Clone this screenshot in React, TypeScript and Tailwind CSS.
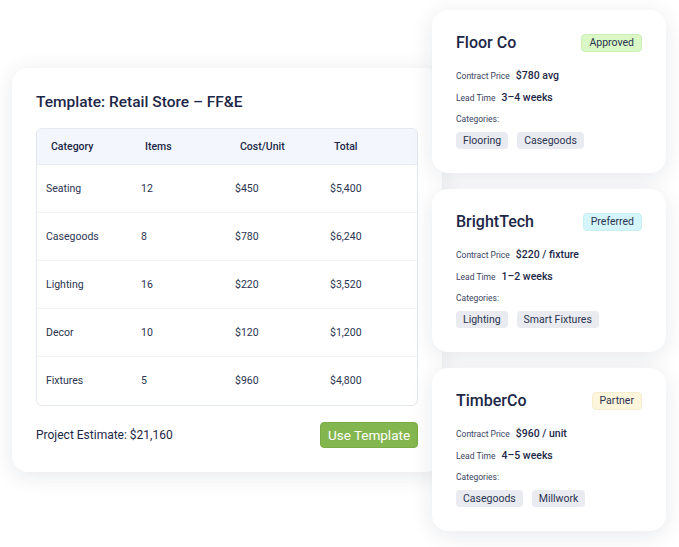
const rows = [
  { category: 'Seating', items: '12', cost: '$450', total: '$5,400' },
  { category: 'Casegoods', items: '8', cost: '$780', total: '$6,240' },
  { category: 'Lighting', items: '16', cost: '$220', total: '$3,520' },
  { category: 'Decor', items: '10', cost: '$120', total: '$1,200' },
  { category: 'Fixtures', items: '5', cost: '$960', total: '$4,800' },
]

const vendors = [
  {
    name: 'Floor Co',
    badge: 'Approved',
    badgeClass: 'bg-[#d9f8c6] border-[#cbefb5]',
    price: '$780 avg',
    lead: '3–4 weeks',
    tags: ['Flooring', 'Casegoods'],
  },
  {
    name: 'BrightTech',
    badge: 'Preferred',
    badgeClass: 'bg-[#d4f5f9] border-[#c6eef4]',
    price: '$220 / fixture',
    lead: '1–2 weeks',
    tags: ['Lighting', 'Smart Fixtures'],
  },
  {
    name: 'TimberCo',
    badge: 'Partner',
    badgeClass: 'bg-[#fdf5dc] border-[#f7eccb]',
    price: '$960 / unit',
    lead: '4–5 weeks',
    tags: ['Casegoods', 'Millwork'],
  },
]

// Карточка поставщика
const VendorCard = ({ v }: { v: (typeof vendors)[number] }) => (
  <div className="h-[163px] bg-white rounded-2xl shadow-[0_4px_22px_rgba(20,30,60,0.10)] px-6 pt-[22px]">
    <div className="flex items-center justify-between h-[22px]">
      <span className="text-[16px] font-medium text-[#1d2747] leading-[22px]">{v.name}</span>
      <span className={`h-[18px] px-[7px] rounded-[4px] border text-[10.5px] leading-[16px] text-[#2b3450] ${v.badgeClass}`}>
        {v.badge}
      </span>
    </div>
    <div className="mt-[14px] flex items-center h-4 gap-[6px]">
      <span className="text-[8.5px] text-[#3a4262]">Contract Price</span>
      <span className="text-[10.5px] font-medium text-[#1d2747]">{v.price}</span>
    </div>
    <div className="mt-[6px] flex items-center h-4 gap-[6px]">
      <span className="text-[8.5px] text-[#3a4262]">Lead Time</span>
      <span className="text-[10.5px] font-medium text-[#1d2747]">{v.lead}</span>
    </div>
    <div className="mt-[6px] h-[14px] text-[8.5px] leading-[14px] text-[#3a4262]">Categories:</div>
    <div className="mt-[6px] flex gap-[9px]">
      {v.tags.map((t) => (
        <span key={t} className="h-[17px] px-[7px] rounded-[4px] bg-[#e9ebf0] text-[10.5px] leading-[17px] text-[#2b3450]">
          {t}
        </span>
      ))}
    </div>
  </div>
)

function App() {
  return (
    <div className="relative w-[679px] h-[547px] bg-white font-['Roboto',sans-serif] overflow-hidden">
      <div className="ml-3 mt-[68px] w-[430px] bg-white rounded-2xl shadow-[0_4px_22px_rgba(20,30,60,0.10)] px-6 pt-6 pb-6">
        <h1 className="text-[15.5px] leading-5 font-medium text-[#1d2747]">Template: Retail Store – FF&amp;E</h1>
        <div className="mt-4 w-[382px] border border-[#e4e8ef] rounded-md overflow-hidden">
          <div className="grid grid-cols-4 h-9 items-center bg-[#f3f7fd] border-b border-[#e8ecf3] text-[10.5px] font-medium text-[#1d2747]">
            <span className="pl-[14px]">Category</span>
            <span className="pl-[13px]">Items</span>
            <span className="pl-[13px]">Cost/Unit</span>
            <span className="pl-3">Total</span>
          </div>
          {rows.map((r, i) => (
            <div
              key={r.category}
              className={`grid grid-cols-4 h-12 items-center text-[10.5px] text-[#2b3450] ${i < rows.length - 1 ? 'border-b border-[#f0f2f5]' : ''}`}
            >
              <span className="pl-[9px]">{r.category}</span>
              <span className="pl-[9px]">{r.items}</span>
              <span className="pl-2">{r.cost}</span>
              <span className="pl-2">{r.total}</span>
            </div>
          ))}
        </div>
        <div className="mt-4 flex items-center justify-between w-[382px]">
          <span className="text-[12px] text-[#1d2747]">Project Estimate: $21,160</span>
          <button className="h-[26px] w-[98px] rounded-[4px] bg-[#84b64f] border border-[#7aab46] text-white text-[13.5px]">
            Use Template
          </button>
        </div>
      </div>

      {/* vendors stack overlaps the template card */}
      <div className="absolute left-[432px] top-[10px] w-[234px] flex flex-col gap-4">
        {vendors.map((v) => (
          <VendorCard key={v.name} v={v} />
        ))}
      </div>
    </div>
  )
}

export default App
